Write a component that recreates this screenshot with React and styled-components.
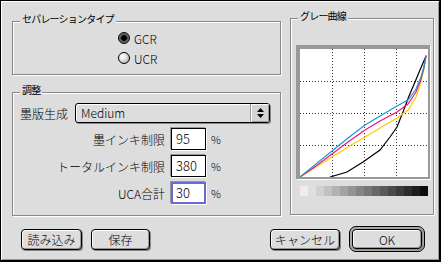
import styled, { createGlobalStyle } from 'styled-components';

const GlobalStyle = createGlobalStyle`
  html, body { margin: 0; padding: 0; background: #fff; }
  body {
    font-family: "Noto Sans CJK JP", "Noto Sans", sans-serif;
    font-size: 12px;
    font-weight: 300;
    color: #000;
  }
`

const Dialog = styled.div`
  box-sizing: border-box;
  width: 441px;
  height: 262px;
  background: #dddddd;
  border-top: 1px solid #000;
  border-left: 1px solid #000;
  border-right: 2px solid #000;
  border-bottom: 2px solid #000;
  box-shadow: inset 1px 1px 0 #fff, inset -1px -1px 0 #999;
  display: flex;
  flex-direction: column;
`

const Main = styled.div`
  display: flex;
  align-items: flex-start;
  gap: 9px;
  padding: 17px 0 0 11px;
`

const LeftCol = styled.div`
  display: flex;
  flex-direction: column;
  gap: 17px;
  width: 269px;
  margin-top: 3px;
`

const Group = styled.div`
  position: relative;
  box-sizing: border-box;
  width: ${props => props.$w}px;
  height: ${props => props.$h}px;
  border: 1px solid #888;
  box-shadow: 1px 1px 0 #fff, inset 1px 1px 0 #fff;
`

const GroupTitle = styled.span`
  position: absolute;
  top: -9px;
  left: 7px;
  padding: 0 2px;
  background: #dddddd;
  font-size: 10px;
  font-weight: 400;
  line-height: 12px;
  letter-spacing: -0.8px;
  white-space: nowrap;
`

const RadioList = styled.div`
  display: flex;
  flex-direction: column;
  padding: 6px 0 0 105px;
`

const RadioRow = styled.label`
  display: flex;
  align-items: center;
  gap: 4px;
  height: 20px;
  font-size: 12px;
`

const RadioDot = styled.span`
  box-sizing: border-box;
  width: 12px;
  height: 12px;
  border-radius: 50%;
  border: 1px solid #000;
  background: ${props => props.$on
    ? 'radial-gradient(circle, #000 0 2.5px, #444 3px, #777 5px)'
    : 'radial-gradient(circle at 35% 35%, #fff 0, #eee 30%, #999 100%)'};
`

const Form = styled.div`
  display: flex;
  flex-direction: column;
  gap: 5px;
  padding: 10px 0 0 7px;
`

const SelectRow = styled.div`
  display: flex;
  align-items: center;
  gap: 7px;
  height: 20px;
`

const Select = styled.div`
  box-sizing: border-box;
  display: flex;
  width: 195px;
  height: 20px;
  border: 1px solid #000;
  border-radius: 3px;
  background: #dddddd;
  box-shadow: inset 1px 1px 0 #fff, 1px 1px 0 #888;
  overflow: hidden;
`

const SelectValue = styled.span`
  flex: 1;
  padding-left: 5px;
  font-size: 12px;
  line-height: 18px;
`

const SelectArrow = styled.span`
  display: flex;
  align-items: center;
  justify-content: center;
  width: 18px;
  border-left: 1px solid #999;
  background: #d4d4d4;
  box-shadow: inset 1px 1px 0 #fff, inset -1px -1px 0 #999;
`

const InputRow = styled.div`
  display: flex;
  align-items: center;
  height: 22px;
`

const FieldLabel = styled.span`
  width: 145px;
  margin-right: 6px;
  text-align: right;
  font-size: 12px;
  white-space: nowrap;
`

const Field = styled.span`
  box-sizing: border-box;
  width: 35px;
  height: 22px;
  padding-left: ${props => props.$focus ? 3 : 4}px;
  border: ${props => props.$focus ? '2px solid #6a6ad2' : '1px solid #000'};
  background: #fff;
  box-shadow: -1px -1px 0 #999, 1px 1px 0 #fff;
  font-size: 13px;
  line-height: ${props => props.$focus ? 18 : 20}px;
`

const Percent = styled.span`
  margin-left: 5px;
  font-size: 11px;
`

const GraphCol = styled.div`
  display: flex;
  flex-direction: column;
  align-items: flex-start;
  padding: 26px 0 0 5px;
`

const GraphFrame = styled.div`
  display: flex;
  padding: 4px 2px 2px 4px;
  background: #999;
  box-shadow: 1px 1px 0 #fff;
`

const Plot = styled.svg`
  display: block;
  background: #fff;
`

const Strip = styled.div`
  display: flex;
  width: 128px;
  height: 10px;
  margin: 7px 0 0 4px;
`

const Step = styled.span`
  flex: 1;
  background: ${props => props.$c};
`

const Footer = styled.div`
  display: flex;
  align-items: center;
  height: 26px;
  margin-top: 10px;
  padding: 0 14px 0 20px;
`

const ButtonGroup = styled.div`
  display: flex;
  align-items: center;
  gap: 9px;
`

const Spacer = styled.div`
  flex: 1;
`

const Button = styled.button`
  box-sizing: border-box;
  width: ${props => props.$w}px;
  height: ${props => props.$h || 21}px;
  padding: 0;
  border: 1px solid #000;
  border-radius: 4px;
  background: #dddddd;
  box-shadow: inset 1px 1px 0 #fff, inset -1px -1px 0 #999, 1px 1px 0 #888;
  font-family: "Noto Sans CJK JP", "Noto Sans", sans-serif;
  font-size: 12px;
  font-weight: 300;
  color: #000;
`

const DefaultRing = styled.div`
  box-sizing: border-box;
  display: flex;
  width: 76px;
  height: 26px;
  padding: 2px;
  border: 1px solid #000;
  border-radius: 7px;
  background: #aaa;
`

const curves = {
  black: '30,128 47,123 63,113 80,101 90,88 97,78 103,63 109,47 115,33 120,21 126,7',
  yellow: '0,128 16,118 32,108 48,98 65,88 80,79 97,69 108,61 116,48 121,33 124,20 126,8',
  magenta: '0,128 16,117 32,105 48,93 65,81 80,72 97,63 108,55 116,43 121,30 124,18 126,7',
  cyan: '0,128 16,115 32,102 48,89 65,76 80,67 97,57 108,51 116,40 121,28 124,18 126,6',
}

const steps = Array.from({ length: 16 }, (_, i) => {
  const v = Math.round(238 - i * (238 - 14) / 15)
  return `rgb(${v},${v},${v})`
})

function GrayCurve(){
  return(
    <Plot width="128" height="128" viewBox="0 0 128 128">
      {[32, 64, 96].map(p => (
        <g key={p} stroke="#333" strokeWidth="1" strokeDasharray="1 2" shapeRendering="crispEdges">
          <line x1={p + 0.5} y1="0" x2={p + 0.5} y2="128" />
          <line x1="0" y1={p + 0.5} x2="128" y2={p + 0.5} />
        </g>
      ))}
      <polyline points={curves.black} fill="none" stroke="#000" strokeWidth="1.2" />
      <polyline points={curves.yellow} fill="none" stroke="#ffcc00" strokeWidth="1.2" />
      <polyline points={curves.magenta} fill="none" stroke="#f0157a" strokeWidth="1.2" />
      <polyline points={curves.cyan} fill="none" stroke="#1a9ad0" strokeWidth="1.2" />
    </Plot>
  )
}

export default function App(){
  return(
    <>
      <GlobalStyle />
      <Dialog>
        <Main>
          <LeftCol>
            <Group $w={269} $h={54}>
              <GroupTitle>セパレーションタイプ</GroupTitle>
              <RadioList>
                <RadioRow><RadioDot $on />GCR</RadioRow>
                <RadioRow><RadioDot />UCR</RadioRow>
              </RadioList>
            </Group>
            <Group $w={269} $h={124}>
              <GroupTitle>調整</GroupTitle>
              <Form>
                <SelectRow>
                  <span>墨版生成</span>
                  <Select>
                    <SelectValue>Medium</SelectValue>
                    <SelectArrow>
                      <svg width="7" height="10" viewBox="0 0 7 10">
                        <path d="M0 4 L3.5 0 L7 4 Z M0 6 L3.5 10 L7 6 Z" fill="#000" />
                      </svg>
                    </SelectArrow>
                  </Select>
                </SelectRow>
                <InputRow>
                  <FieldLabel>墨インキ制限</FieldLabel>
                  <Field>95</Field>
                  <Percent>%</Percent>
                </InputRow>
                <InputRow>
                  <FieldLabel>トータルインキ制限</FieldLabel>
                  <Field>380</Field>
                  <Percent>%</Percent>
                </InputRow>
                <InputRow>
                  <FieldLabel>UCA合計</FieldLabel>
                  <Field $focus>30</Field>
                  <Percent>%</Percent>
                </InputRow>
              </Form>
            </Group>
          </LeftCol>
          <Group $w={144} $h={197}>
            <GroupTitle>グレー曲線</GroupTitle>
            <GraphCol>
              <GraphFrame>
                <GrayCurve />
              </GraphFrame>
              <Strip>
                {steps.map((c, i) => <Step key={i} $c={c} />)}
              </Strip>
            </GraphCol>
          </Group>
        </Main>
        <Footer>
          <ButtonGroup>
            <Button $w={61}>読み込み</Button>
            <Button $w={59}>保存</Button>
          </ButtonGroup>
          <Spacer />
          <ButtonGroup>
            <Button $w={70}>キャンセル</Button>
            <DefaultRing>
              <Button $w={70} $h={20}>OK</Button>
            </DefaultRing>
          </ButtonGroup>
        </Footer>
      </Dialog>
    </>
  )
}
